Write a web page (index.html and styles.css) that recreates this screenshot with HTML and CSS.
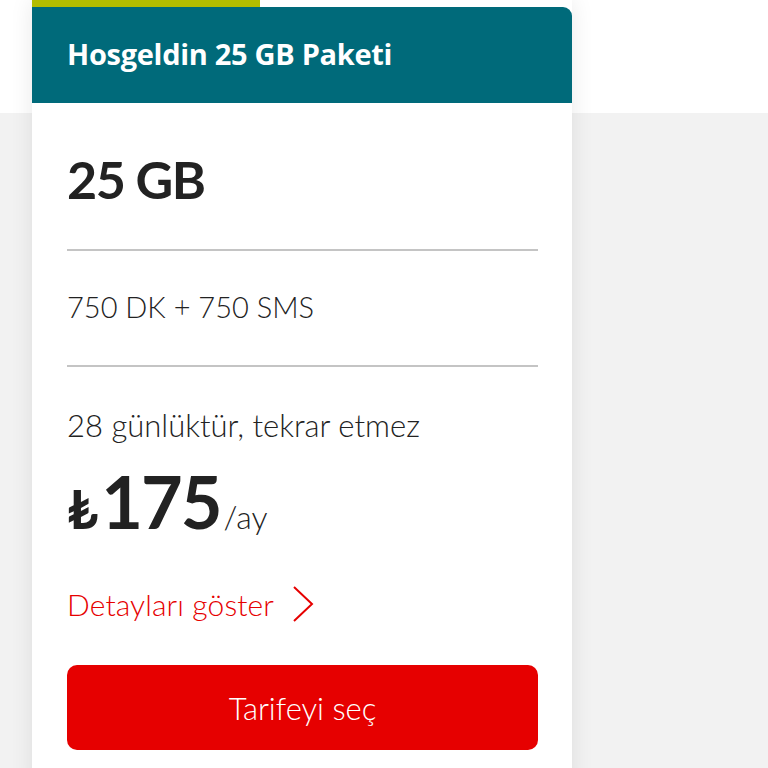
FILE: index.html
```html
<!DOCTYPE html>
<html lang="tr">
<head>
	<meta charset="utf-8">
	<meta name="viewport" content="width=device-width, initial-scale=1">
	<title>Hosgeldin 25 GB Paketi</title>
	<link rel="stylesheet" href="styles.css">
</head>
<body>

<div class='page'>
	<article class='tariff'>
		<div class='tariff-flag'></div>
		<header class='tariff-head'>
			<h2>Hosgeldin 25 GB Paketi</h2>
		</header>

		<div class='tariff-body'>
			<p class='data'>25 GB</p>
			<p class='row'>750 DK + 750 SMS</p>
			<p class='period'>28 günlüktür, tekrar etmez</p>
			<p class='price'><span class='cur'>₺</span>175<span class='per'>/ay</span></p>

			<a class='details' href='#'>
				Detayları göster
				<svg width='22' height='38' viewBox='0 0 22 38'>
					<path d='M2 2 L20 19 L2 36' fill='none' stroke='#e60000' stroke-width='2'/>
				</svg>
			</a>

			<button class='choose'>Tarifeyi seç</button>
		</div>
	</article>
</div>

</body>
</html>
```

FILE: styles.css
```css
body {
	margin: 0;
	padding: 0;
	font-family: 'Lato', 'Open Sans', sans-serif;
	color: #222;
	background: linear-gradient(#fff 0, #fff 113px, #f2f2f2 113px);
	min-height: 768px;
	overflow: hidden;
}

.page {
	padding-left: 32px;
}

.tariff {
	width: 540px;
	background: #fff;
	box-shadow: 0 0 22px rgba(0, 0, 0, 0.09);
}

.tariff-flag {
	width: 228px;
	height: 7px;
	background: #b3bd00;
}

.tariff-head {
	height: 96px;
	background: #006a7a;
	border-top-right-radius: 9px;
	padding: 0 35px;
	display: flex;
	align-items: center;
}

.tariff-head h2 {
	margin: 0 0 4px;
	color: #fff;
	font-family: 'Open Sans', sans-serif;
	font-size: 29px;
	font-weight: bold;
	letter-spacing: -0.3px;
}

.tariff-body {
	padding: 0 34px 40px 35px;
}

.tariff-body p {
	margin: 0;
}

.data {
	font-size: 52px;
	font-weight: bold;
	line-height: 60px;
	letter-spacing: -1.5px;
	padding: 46px 0 40px;
	border-bottom: 2px solid #c4c4c4;
}

.row {
	font-size: 29px;
	font-weight: 300;
	line-height: 40px;
	padding: 36px 0 38px;
	border-bottom: 2px solid #c4c4c4;
}

.period {
	font-size: 31px;
	font-weight: 300;
	line-height: 40px;
	padding-top: 38px;
}

.price {
	font-size: 72px;
	font-weight: bold;
	line-height: 1;
	letter-spacing: -2px;
	margin-top: 20px !important;
}

.cur {
	font-size: 54px;
	margin-right: 5px;
}

.per {
	font-size: 32px;
	font-weight: 300;
	letter-spacing: 0;
	margin-left: 3px;
}

.details {
	display: flex;
	align-items: center;
	gap: 18px;
	margin-top: 48px;
	color: #e60000;
	text-decoration: none;
	font-size: 30px;
	font-weight: 300;
	letter-spacing: 0.1px;
}

.choose {
	display: block;
	width: 100%;
	height: 85px;
	margin-top: 42px;
	border: 0;
	border-radius: 10px;
	background: #e60000;
	color: #fff;
	font-family: inherit;
	font-size: 31px;
	font-weight: 300;
}
```
